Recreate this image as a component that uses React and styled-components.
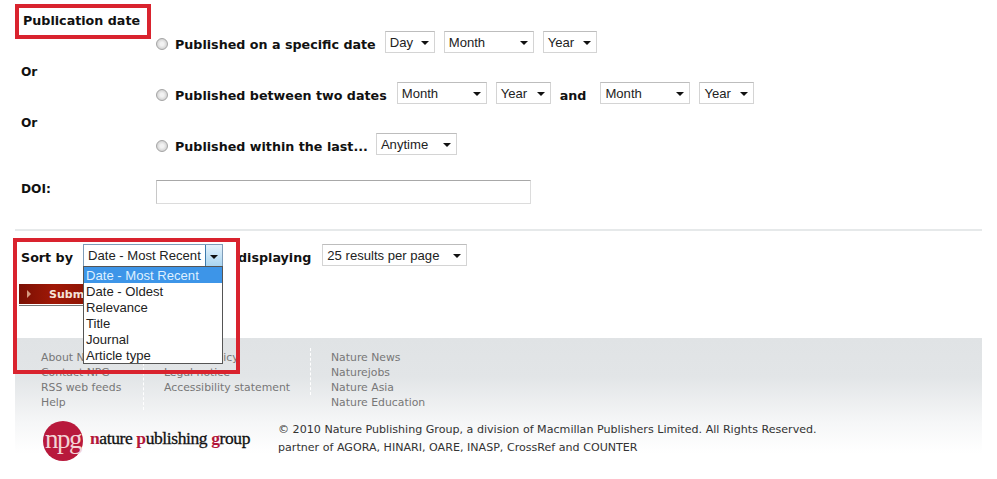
import React from 'react';
import styled, { createGlobalStyle } from 'styled-components';

const GlobalStyle = createGlobalStyle`
  html, body { margin: 0; padding: 0; background: #fff; }
  body { font-family: "DejaVu Sans", Verdana, sans-serif; color: #111; }
`;

const Page = styled.div`
  position: relative;
  width: 997px;
  height: 479px;
  overflow: hidden;
  padding: 0 15px;
  box-sizing: border-box;
`;

const Heading = styled.h2`
  margin: 0;
  height: 21px;
  padding: 10px 0 0 8px;
  font-size: 12.7px;
  line-height: 21px;
  font-weight: bold;
  color: #111;
`;

const Highlight = styled.div`
  position: absolute;
  left: ${p => p.$left}px;
  top: ${p => p.$top}px;
  width: ${p => p.$width}px;
  height: ${p => p.$height}px;
  box-sizing: border-box;
  border: 4px solid #d9232e;
  pointer-events: none;
`;

const OptionRow = styled.div`
  display: flex;
  align-items: center;
  gap: 9px;
  height: 22px;
  padding-left: 141px;
`;

const Radio = styled.span`
  width: 10px;
  height: 10px;
  flex: none;
  border: 1px solid #a4a4a4;
  border-radius: 50%;
  background: radial-gradient(circle, #f2f2f2 25%, #c6c6c6 90%);
  margin: 3px -2px 0 0;
`;

const Label = styled.span`
  font-size: 12.7px;
  font-weight: bold;
  line-height: 18px;
  padding-top: 5px;
  white-space: nowrap;
  margin-right: ${p => p.$after || 0}px;
`;

const OrLabel = styled.div`
  height: 18px;
  padding: 10px 0 1px 6px;
  font-size: 12.2px;
  line-height: 18px;
  font-weight: bold;
`;

const Select = styled.div`
  width: ${p => p.$width}px;
  height: 22px;
  flex: none;
  box-sizing: border-box;
  display: flex;
  align-items: center;
  justify-content: space-between;
  padding: 0 5px 0 4px;
  border: 1px solid #d4d4d4;
  border-top-color: #bdbdbd;
  background: #fff;
  font-family: "Liberation Sans", Arial, sans-serif;
  font-size: 13.1px;
  color: #222;
  white-space: nowrap;
`;

const Caret = styled.span`
  width: 0;
  height: 0;
  margin-top: 2px;
  border-left: 4px solid transparent;
  border-right: 4px solid transparent;
  border-top: 4px solid #111;
`;

const DoiRow = styled.div`
  display: flex;
  align-items: center;
  margin-top: 25px;
  height: 24px;
`;

const DoiLabel = styled.label`
  width: 141px;
  padding-left: 6px;
  box-sizing: border-box;
  font-size: 12.2px;
  font-weight: bold;
  margin-top: -6px;
`;

const DoiInput = styled.div`
  width: 375px;
  height: 24px;
  box-sizing: border-box;
  border: 1px solid #dcdcdc;
  border-top-color: #a8a8a8;
  border-left-color: #c8c8c8;
`;

const Divider = styled.hr`
  margin: 25px 0 0;
  height: 2px;
  border: 0;
  background: #e6e9ea;
`;

const SortRow = styled.div`
  display: flex;
  align-items: center;
  height: 22px;
  margin-top: 13px;
  padding-left: 6px;
`;

const SortLabel = styled.span`
  width: 62px;
  font-size: 12.7px;
  font-weight: bold;
  line-height: 18px;
  padding-top: 5px;
`;

const DisplayingLabel = styled(Label)`
  margin: 0 11px 0 15px;
`;

const SortWrap = styled.div`
  position: relative;
  width: 140px;
  flex: none;
`;

const SortSelect = styled.div`
  height: 22px;
  box-sizing: border-box;
  display: flex;
  align-items: center;
  justify-content: space-between;
  border: 1px solid #7f9db9;
  border-bottom: 0;
  padding-left: 4px;
  font-family: "Liberation Sans", Arial, sans-serif;
  font-size: 13.1px;
  color: #222;
  white-space: nowrap;
`;

const SortButton = styled.span`
  display: flex;
  align-items: center;
  justify-content: center;
  width: 16px;
  height: 21px;
  border-left: 1px solid #3d7bad;
  background: linear-gradient(#e4f2fb, #a9d5f1);
`;

const Dropdown = styled.ul`
  position: absolute;
  left: 0;
  top: 22px;
  width: 140px;
  box-sizing: border-box;
  margin: 0;
  padding: 0;
  list-style: none;
  background: #fff;
  border: 1px solid #555;
  font-family: "Liberation Sans", Arial, sans-serif;
  font-size: 13.1px;
  color: #222;
  z-index: 2;
`;

const DropItem = styled.li`
  height: 16px;
  line-height: 18px;
  padding-left: 2px;
  white-space: nowrap;
  background: ${p => (p.$active ? '#3d95e8' : 'transparent')};
  color: ${p => (p.$active ? '#dff0ff' : '#222')};
`;

const SubmitWrap = styled.div`
  margin: 18px 0 0 4px;
  width: 100px;
  height: 21px;
  border-bottom: 1px solid #777;
`;

const SubmitButton = styled.div`
  height: 20px;
  display: flex;
  align-items: center;
  padding-left: 8px;
  background: linear-gradient(90deg, #7a1004, #a01806 35%, #7d1204);
  color: #f5e3d8;
  font-size: 11px;
  font-weight: bold;
`;

const SubmitArrow = styled.span`
  width: 0;
  height: 0;
  margin-right: 18px;
  border-top: 4px solid transparent;
  border-bottom: 4px solid transparent;
  border-left: 4px solid #d59a80;
`;

const Footer = styled.footer`
  margin-top: 32px;
  height: 128px;
  box-sizing: border-box;
  padding: 12px 0 0 26px;
  background: linear-gradient(#e0e3e5, #e2e5e7 30%, #f5f6f7 65%, #fff 90%);
`;

const LinkColumns = styled.div`
  display: flex;
  align-items: flex-start;
  height: 60px;
`;

const LinkColumn = styled.ul`
  width: ${p => p.$width}px;
  margin: -2px 20px 0 0;
  padding: 2px 0 0;
  list-style: none;
  border-right: ${p => (p.$last ? '0' : '1px dashed #fff')};
  box-sizing: border-box;
`;

const LinkItem = styled.li`
  font-size: 10.85px;
  line-height: 15px;
  color: #777;
  white-space: nowrap;
`;

const BrandRow = styled.div`
  display: flex;
  align-items: flex-start;
  margin-top: 11px;
  padding-left: 2px;
`;

const Logo = styled.svg`
  width: 40px;
  height: 40px;
  flex: none;
`;

const Wordmark = styled.div`
  width: 188px;
  margin: 6px 0 0 7px;
  font-family: "Liberation Serif", "Times New Roman", serif;
  font-size: 17.5px;
  line-height: 22px;
  letter-spacing: -0.4px;
  -webkit-text-stroke: 0.3px #111;
  color: #111;
  white-space: nowrap;

  b {
    font-weight: bold;
    color: #b3163a;
    -webkit-text-stroke: 0;
  }
`;

const Legal = styled.div`
  font-size: 11.1px;
  line-height: 18px;
  color: #333;
  white-space: nowrap;
`;

const links = [
  { width: 103, items: ['About NPG', 'Contact NPG', 'RSS web feeds', 'Help'] },
  { width: 147, items: ['Privacy policy', 'Legal notice', 'Accessibility statement'] },
  { width: 120, items: ['Nature News', 'Naturejobs', 'Nature Asia', 'Nature Education'], last: true },
];

const sortOptions = ['Date - Most Recent', 'Date - Oldest', 'Relevance', 'Title', 'Journal', 'Article type'];

function Drop({ width, children }) {
  return (
    <Select $width={width}>
      <span>{children}</span>
      <Caret />
    </Select>
  );
}

export default function App() {
  return (
    <Page>
      <GlobalStyle />
      <Heading>Publication date</Heading>
      <OptionRow>
        <Radio />
        <Label>Published on a specific date</Label>
        <Drop width={50}>Day</Drop>
        <Drop width={90}>Month</Drop>
        <Drop width={54}>Year</Drop>
      </OptionRow>
      <OrLabel>Or</OrLabel>
      <OptionRow>
        <Radio />
        <Label $after={1}>Published between two dates</Label>
        <Drop width={90}>Month</Drop>
        <Drop width={55}>Year</Drop>
        <Label $after={5}>and</Label>
        <Drop width={90}>Month</Drop>
        <Drop width={55}>Year</Drop>
      </OptionRow>
      <OrLabel>Or</OrLabel>
      <OptionRow>
        <Radio />
        <Label $after={-1}>Published within the last...</Label>
        <Drop width={81}>Anytime</Drop>
      </OptionRow>
      <DoiRow>
        <DoiLabel>DOI:</DoiLabel>
        <DoiInput />
      </DoiRow>
      <Divider />
      <SortRow>
        <SortLabel>Sort by</SortLabel>
        <SortWrap>
          <SortSelect>
            <span>Date - Most Recent</span>
            <SortButton><Caret /></SortButton>
          </SortSelect>
          <Dropdown>
            {sortOptions.map((o, i) => (
              <DropItem key={o} $active={i === 0}>{o}</DropItem>
            ))}
          </Dropdown>
        </SortWrap>
        <DisplayingLabel>displaying</DisplayingLabel>
        <Drop width={145}>25 results per page</Drop>
      </SortRow>
      <SubmitWrap>
        <SubmitButton><SubmitArrow />Submit</SubmitButton>
      </SubmitWrap>
      <Footer>
        <LinkColumns>
          {links.map(col => (
            <LinkColumn key={col.items[0]} $width={col.width} $last={col.last}>
              {col.items.map(item => <LinkItem key={item}>{item}</LinkItem>)}
            </LinkColumn>
          ))}
        </LinkColumns>
        <BrandRow>
          <Logo viewBox="0 0 40 40">
            <circle cx="20" cy="20" r="20" fill="#b8193c" />
            <text x="20" y="27" textAnchor="middle" fontFamily="Liberation Serif, serif" fontSize="27" letterSpacing="-1.5" fill="#f3d3d6">npg</text>
          </Logo>
          <Wordmark><b>n</b>ature <b>p</b>ublishing <b>g</b>roup</Wordmark>
          <Legal>
            © 2010 Nature Publishing Group, a division of Macmillan Publishers Limited. All Rights Reserved.
            <br />
            partner of AGORA, HINARI, OARE, INASP, CrossRef and COUNTER
          </Legal>
        </BrandRow>
      </Footer>
      <Highlight $left={15} $top={4} $width={136} $height={35} />
      <Highlight $left={13} $top={238} $width={227} $height={136} />
    </Page>
  );
}
